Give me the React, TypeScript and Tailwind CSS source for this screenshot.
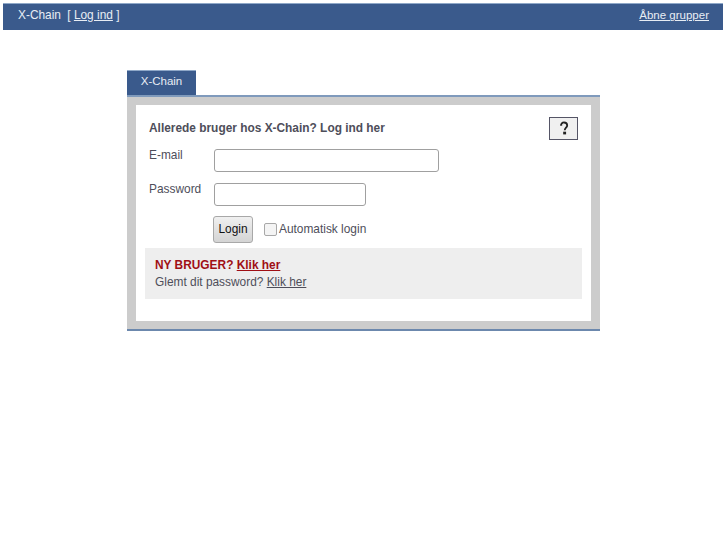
import { useState } from "react";

const App = () => {
  const [auto, setAuto] = useState(false);

  return (
    <div className="min-h-[545px] bg-white p-[3px] font-['Liberation_Sans',Arial,sans-serif] text-[11.9px] text-[#4e4e5a]">
      {/* Top bar */}
      <div className="flex h-[27px] w-[720px] items-center justify-between border-t border-[#8fa8c8] bg-[#3a5a8c] pb-[2px] pl-[15px] pr-[14px] text-[#e8edf4]">
        <div>
          X-Chain <span className="ml-[3px]">[ <a href="#" className="underline">Log ind</a> ]</span>
        </div>
        <a href="#" className="text-[11.5px] underline">Åbne grupper</a>
      </div>

      {/* Login box */}
      <div className="ml-[124px] mt-[40px] w-[473px]">
        <div className="flex h-[25px] w-[69px] items-center justify-center border-t border-[#8fa8c8] bg-[#3a5a8c] pb-[2px] text-[11.5px] text-[#e8edf4]">
          X-Chain
        </div>
        <div className="border-b-2 border-t-2 border-b-[#6c88ad] border-t-[#7f9abc] bg-[#cccccc] px-[9px] py-[8px]">
          <div className="h-[216px] bg-white px-[9px] pt-[12px]">
            <div className="flex h-[23px] items-center justify-between px-[4px]">
              <b className="mt-[1px] font-bold">Allerede bruger hos X-Chain? Log ind her</b>
              <button className="flex h-[23px] w-[29px] items-center justify-center border border-[#555566] bg-[#f0f0f0]">
                <svg width="10" height="15" viewBox="0 0 11 16">
                  <path d="M2.2 5C2 2.6 3.6 1.4 5.5 1.4S9 2.6 9 4.6C9 7 6.3 7.2 6.3 10" fill="none" stroke="#222" strokeWidth="2" />
                  <path d="M3.8 5C3.6 3.4 4.5 2.7 5.5 2.7" fill="none" stroke="#bbb" strokeWidth="0.8" />
                  <rect x="4.6" y="11.5" width="3.2" height="3" fill="#222" />
                </svg>
              </button>
            </div>

            <div className="mt-[9px] flex items-start pl-[4px]">
              <label className="mt-[-2px] w-[65px]">E-mail</label>
              <input className="h-[23px] w-[225px] rounded-[3px] border border-[#a0a0a0] bg-white" />
            </div>
            <div className="mt-[11px] flex items-start pl-[4px]">
              <label className="mt-[-2px] w-[65px]">Password</label>
              <input type="password" className="h-[23px] w-[152px] rounded-[3px] border border-[#a0a0a0] bg-white" />
            </div>
            <div className="mt-[10px] flex items-center pl-[68px]">
              <button className="h-[27px] w-[40px] rounded-[3px] border border-[#a8a8a8] bg-gradient-to-b from-[#f0f0f0] to-[#d4d4d4] text-[#111]">
                Login
              </button>
              <button
                onClick={() => setAuto(!auto)}
                className={`ml-[11px] h-[13px] w-[13px] rounded-[2px] border border-[#a8a8a8] ${auto ? "bg-[#3a5a8c]" : "bg-[#f4f4f4]"}`}
              />
              <span className="ml-[2px] mt-[1px]">Automatisk login</span>
            </div>
            <div className="mt-[5px] flex h-[51px] flex-col justify-center bg-[#eeeeee] pl-[10px] leading-[17px]">
              <div className="font-bold text-[#a00f14]">
                NY BRUGER? <a href="#" className="underline">Klik her</a>
              </div>
              <div>
                Glemt dit password? <a href="#" className="underline">Klik her</a>
              </div>
            </div>
          </div>
        </div>
      </div>
    </div>
  );
};

export default App;
